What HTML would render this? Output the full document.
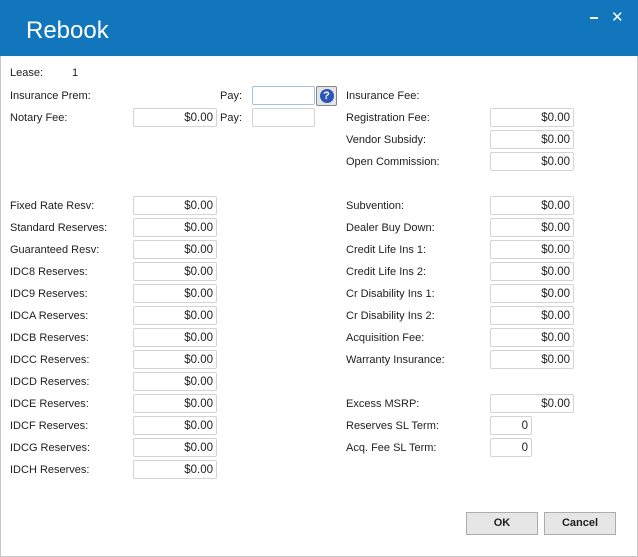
<!DOCTYPE html>
<html><head><style>
body{margin:0;width:638px;height:557px;position:relative;background:#fff;font-family:"Liberation Sans",sans-serif;font-size:11px;color:#1e1e1e;overflow:hidden}
.hd{position:absolute;left:0;top:0;width:638px;height:56px;background:#1176bc}
.t{position:absolute;left:26px;top:17px;font-size:24px;color:#fff;font-weight:normal}
.fr{position:absolute;left:0;top:56px;width:636px;height:500px;border:1px solid #c9c9c9;border-top:none}
.l{position:absolute;white-space:nowrap;line-height:14px}
.i{position:absolute;height:19px;border:1px solid #d3d3d3;border-radius:2px;box-sizing:border-box;text-align:right;padding-right:3px;line-height:18px;font-size:11.5px;background:#fff}
.b{position:absolute;top:512px;width:72px;height:23px;background:#e6e6e6;border:1px solid #adadad;box-sizing:border-box;text-align:center;line-height:21px;font-weight:bold;font-size:11px}
</style></head><body>
<div class="hd"><div class="t">Rebook</div>
<div style="position:absolute;left:590px;top:17px;width:8px;height:2px;background:#fff"></div>
<div style="position:absolute;left:611px;top:8px;color:#fff;font-size:15px">✕</div>
</div>
<div class="fr"></div>
<div class="l" style="left:10px;top:66px">Lease:</div><div class="l" style="left:72px;top:66px">1</div>
<div class="l" style="left:10px;top:89px">Insurance Prem:</div>
<div class="l" style="left:220px;top:89px">Pay:</div>
<div class="i" style="left:252px;top:86px;width:63px;border-color:#9dc3e6"></div>
<div style="position:absolute;left:316px;top:86px;width:21px;height:20px;border:1px solid #888;border-radius:2px;box-sizing:border-box;background:#e4e4e4"><div style="margin:2px auto;width:14px;height:14px;border-radius:7px;background:#2a56b8;color:#fff;font-weight:bold;font-size:11px;text-align:center;line-height:14px">?</div></div>
<div class="l" style="left:346px;top:89px">Insurance Fee:</div>
<div class="l" style="left:10px;top:111px">Notary Fee:</div>
<div class="i" style="left:133px;top:108px;width:84px">$0.00</div>
<div class="l" style="left:220px;top:111px">Pay:</div>
<div class="i" style="left:252px;top:108px;width:63px"></div>

<div class="l" style="left:346px;top:111px">Registration Fee:</div><div class="i" style="left:490px;top:108px;width:84px">$0.00</div>
<div class="l" style="left:346px;top:133px">Vendor Subsidy:</div><div class="i" style="left:490px;top:130px;width:84px">$0.00</div>
<div class="l" style="left:346px;top:155px">Open Commission:</div><div class="i" style="left:490px;top:152px;width:84px">$0.00</div>

<div class="l" style="left:10px;top:199px">Fixed Rate Resv:</div><div class="i" style="left:133px;top:196px;width:84px">$0.00</div>
<div class="l" style="left:10px;top:221px">Standard Reserves:</div><div class="i" style="left:133px;top:218px;width:84px">$0.00</div>
<div class="l" style="left:10px;top:243px">Guaranteed Resv:</div><div class="i" style="left:133px;top:240px;width:84px">$0.00</div>
<div class="l" style="left:10px;top:265px">IDC8 Reserves:</div><div class="i" style="left:133px;top:262px;width:84px">$0.00</div>
<div class="l" style="left:10px;top:287px">IDC9 Reserves:</div><div class="i" style="left:133px;top:284px;width:84px">$0.00</div>
<div class="l" style="left:10px;top:309px">IDCA Reserves:</div><div class="i" style="left:133px;top:306px;width:84px">$0.00</div>
<div class="l" style="left:10px;top:331px">IDCB Reserves:</div><div class="i" style="left:133px;top:328px;width:84px">$0.00</div>
<div class="l" style="left:10px;top:353px">IDCC Reserves:</div><div class="i" style="left:133px;top:350px;width:84px">$0.00</div>
<div class="l" style="left:10px;top:375px">IDCD Reserves:</div><div class="i" style="left:133px;top:372px;width:84px">$0.00</div>
<div class="l" style="left:10px;top:397px">IDCE Reserves:</div><div class="i" style="left:133px;top:394px;width:84px">$0.00</div>
<div class="l" style="left:10px;top:419px">IDCF Reserves:</div><div class="i" style="left:133px;top:416px;width:84px">$0.00</div>
<div class="l" style="left:10px;top:441px">IDCG Reserves:</div><div class="i" style="left:133px;top:438px;width:84px">$0.00</div>
<div class="l" style="left:10px;top:463px">IDCH Reserves:</div><div class="i" style="left:133px;top:460px;width:84px">$0.00</div>

<div class="l" style="left:346px;top:199px">Subvention:</div><div class="i" style="left:490px;top:196px;width:84px">$0.00</div>
<div class="l" style="left:346px;top:221px">Dealer Buy Down:</div><div class="i" style="left:490px;top:218px;width:84px">$0.00</div>
<div class="l" style="left:346px;top:243px">Credit Life Ins 1:</div><div class="i" style="left:490px;top:240px;width:84px">$0.00</div>
<div class="l" style="left:346px;top:265px">Credit Life Ins 2:</div><div class="i" style="left:490px;top:262px;width:84px">$0.00</div>
<div class="l" style="left:346px;top:287px">Cr Disability Ins 1:</div><div class="i" style="left:490px;top:284px;width:84px">$0.00</div>
<div class="l" style="left:346px;top:309px">Cr Disability Ins 2:</div><div class="i" style="left:490px;top:306px;width:84px">$0.00</div>
<div class="l" style="left:346px;top:331px">Acquisition Fee:</div><div class="i" style="left:490px;top:328px;width:84px">$0.00</div>
<div class="l" style="left:346px;top:353px">Warranty Insurance:</div><div class="i" style="left:490px;top:350px;width:84px">$0.00</div>
<div class="l" style="left:346px;top:397px">Excess MSRP:</div><div class="i" style="left:490px;top:394px;width:84px">$0.00</div>
<div class="l" style="left:346px;top:419px">Reserves SL Term:</div><div class="i" style="left:490px;top:416px;width:42px">0</div>
<div class="l" style="left:346px;top:441px">Acq. Fee SL Term:</div><div class="i" style="left:490px;top:438px;width:42px">0</div>

<div class="b" style="left:466px">OK</div>
<div class="b" style="left:544px">Cancel</div>
</body></html>
